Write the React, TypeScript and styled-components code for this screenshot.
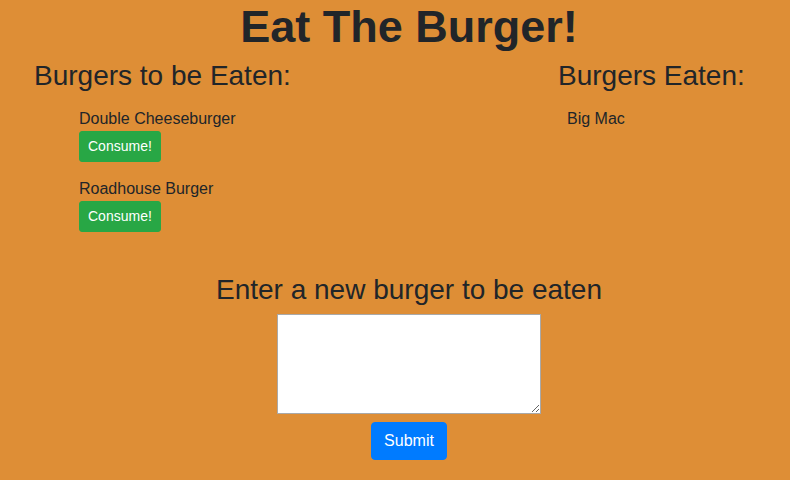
import React from "react";
import styled, { createGlobalStyle } from "styled-components";

const Global = createGlobalStyle`
  html, body { margin: 0; padding: 0; }
  body {
    background: #de8e36;
    color: #212529;
    font-family: "Liberation Sans", Arial, sans-serif;
    font-size: 16px;
    line-height: 1.5;
  }
  * { box-sizing: border-box; }
`;

const Page = styled.div`
  width: 790px;
  height: 480px;
  overflow: hidden;
`;

const Title = styled.h1`
  margin: 0;
  padding-left: 28px;
  font-size: 45px;
  font-weight: 700;
  line-height: 1.2;
  text-align: center;
`;

const Columns = styled.div`
  display: flex;
  margin-top: 5px;
`;

const Column = styled.section<{ $left?: boolean }>`
  flex: ${(p) => (p.$left ? "1" : "0 0 232px")};
  padding-left: ${(p) => (p.$left ? "34px" : "0")};
`;

const Heading = styled.h3`
  margin: 0 0 8px;
  font-size: 28px;
  font-weight: 400;
  line-height: 1.2;
`;

const List = styled.ul<{ $indent: number }>`
  list-style: none;
  margin: 14px 0 0;
  padding-left: ${(p) => p.$indent}px;
`;

const Item = styled.li`
  margin-bottom: 15px;
`;

const Name = styled.div`
  line-height: 24px;
`;

const ConsumeButton = styled.button`
  display: inline-block;
  font-family: inherit;
  font-size: 14px;
  line-height: 1.5;
  padding: 4px 8px;
  border: 1px solid #28a745;
  border-radius: 3px;
  background: #28a745;
  color: #fff;
  cursor: pointer;
`;

const Form = styled.form`
  display: flex;
  flex-direction: column;
  align-items: center;
  padding-left: 28px;
  margin-top: 26px;
`;

const TextArea = styled.textarea`
  width: 264px;
  height: 100px;
  border: 1px solid #a9a9a9;
  background: #fff;
  margin: 0;
`;

const SubmitButton = styled.button`
  margin-top: 8px;
  font-family: inherit;
  font-size: 16px;
  line-height: 1.5;
  padding: 6px 12px;
  border: 1px solid #007bff;
  border-radius: 4px;
  background: #007bff;
  color: #fff;
  cursor: pointer;
`;

const toEat = ["Double Cheeseburger", "Roadhouse Burger"];
const eaten = ["Big Mac"];

export default function App() {
  return (
    <Page>
      <Global />
      <Title>Eat The Burger!</Title>
      <Columns>
        <Column $left>
          <Heading>Burgers to be Eaten:</Heading>
          <List $indent={45}>
            {toEat.map((b) => (
              <Item key={b}>
                <Name>{b}</Name>
                <ConsumeButton type="button">Consume!</ConsumeButton>
              </Item>
            ))}
          </List>
        </Column>
        <Column>
          <Heading>Burgers Eaten:</Heading>
          <List $indent={9}>
            {eaten.map((b) => (
              <Item key={b}>
                <Name>{b}</Name>
              </Item>
            ))}
          </List>
        </Column>
      </Columns>
      <Form onSubmit={(e) => e.preventDefault()}>
        <Heading>Enter a new burger to be eaten</Heading>
        <TextArea />
        <SubmitButton type="submit">Submit</SubmitButton>
      </Form>
    </Page>
  );
}
